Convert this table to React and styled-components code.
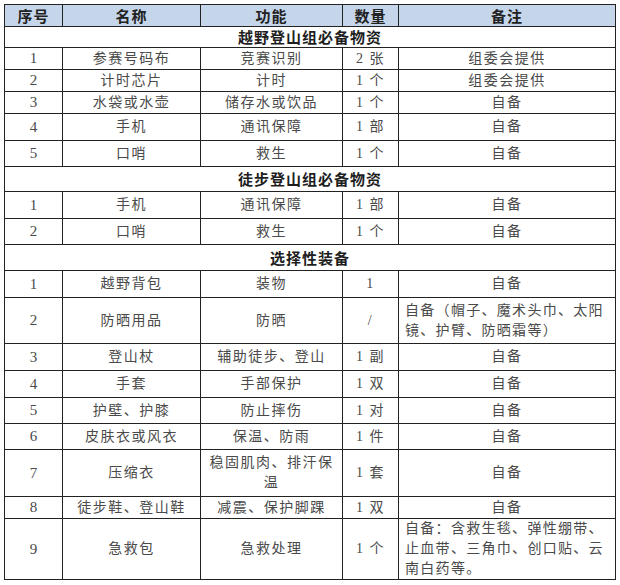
import React from 'react';
import styled, { createGlobalStyle } from 'styled-components';

const Global = createGlobalStyle`
body {
  margin: 0;
  background: #fff;
}
`

const Page = styled.div`
padding: 4px 0 0 4px;
`

const Table = styled.table`
border-collapse: collapse;
table-layout: fixed;
width: 611px;
font-family: "Liberation Serif", "Noto Sans CJK SC", serif;
color: #4a4a4a;
`

const HeadCell = styled.th`
height: 21px;
padding: 0;
border: 1px solid #222;
background: #c6d6ea;
font-family: "Noto Sans CJK SC", sans-serif;
font-size: 15px;
font-weight: 700;
letter-spacing: 1px;
line-height: 20px;
color: #222;
text-align: center;
`

const SectionCell = styled.td`
height: ${props => props.h}px;
padding: 0;
border: 1px solid #222;
font-family: "Noto Sans CJK SC", sans-serif;
font-size: 15px;
font-weight: 700;
letter-spacing: 1px;
line-height: 20px;
color: #1e1e1e;
text-align: center;
`

const Cell = styled.td`
height: ${props => props.h}px;
padding: 0 ${props => (props.left ? '6px' : '0')};
border: 1px solid #222;
font-size: 14px;
letter-spacing: ${props => (props.left ? '1.3px' : '1.5px')};
line-height: 20px;
white-space: nowrap;
overflow: hidden;
text-align: ${props => (props.left ? 'left' : 'center')};
vertical-align: middle;
`

const Num = styled.span`
font-size: 15px;
letter-spacing: 0;
`

const sections = [
  {
    title: '越野登山组必备物资',
    h: 20,
    rows: [
      ['1', '参赛号码布', '竞赛识别', '2 张', '组委会提供', 20],
      ['2', '计时芯片', '计时', '1 个', '组委会提供', 21],
      ['3', '水袋或水壶', '储存水或饮品', '1 个', '自备', 20],
      ['4', '手机', '通讯保障', '1 部', '自备', 26],
      ['5', '口哨', '救生', '1 个', '自备', 25],
    ],
  },
  {
    title: '徒步登山组必备物资',
    h: 24,
    rows: [
      ['1', '手机', '通讯保障', '1 部', '自备', 26],
      ['2', '口哨', '救生', '1 个', '自备', 25],
    ],
  },
  {
    title: '选择性装备',
    h: 25,
    rows: [
      ['1', '越野背包', '装物', '1', '自备', 26],
      ['2', '防晒用品', '防晒', '/', ['自备（帽子、魔术头巾、太阳', '镜、护臂、防晒霜等）'], 45],
      ['3', '登山杖', '辅助徒步、登山', '1 副', '自备', 26],
      ['4', '手套', '手部保护', '1 双', '自备', 26],
      ['5', '护壁、护膝', '防止摔伤', '1 对', '自备', 25],
      ['6', '皮肤衣或风衣', '保温、防雨', '1 件', '自备', 25],
      ['7', '压缩衣', ['稳固肌肉、排汗保', '温'], '1 套', '自备', 46],
      ['8', '徒步鞋、登山鞋', '减震、保护脚踝', '1 双', '自备', 21],
      ['9', '急救包', '急救处理', '1 个', ['自备：含救生毯、弹性绷带、', '止血带、三角巾、创口贴、云', '南白药等。'], 59],
    ],
  },
]

const Lines = ({ value }) => {
  if (!Array.isArray(value)) return value;
  return value.map((line, i) => (
    <React.Fragment key={i}>
      {i > 0 && <br />}
      {line}
    </React.Fragment>
  ));
}

const App = () => {
  return (
    <Page>
      <Global />
      <Table>
        <colgroup>
          <col style={{ width: 58 }} />
          <col style={{ width: 138 }} />
          <col style={{ width: 142 }} />
          <col style={{ width: 56 }} />
          <col style={{ width: 217 }} />
        </colgroup>
        <thead>
          <tr>
            <HeadCell>序号</HeadCell>
            <HeadCell>名称</HeadCell>
            <HeadCell>功能</HeadCell>
            <HeadCell>数量</HeadCell>
            <HeadCell>备注</HeadCell>
          </tr>
        </thead>
        <tbody>
          {sections.map((sec) => (
            <React.Fragment key={sec.title}>
              <tr>
                <SectionCell colSpan={5} h={sec.h}>{sec.title}</SectionCell>
              </tr>
              {sec.rows.map(([no, name, use, qty, note, h]) => (
                <tr key={sec.title + no}>
                  <Cell h={h}><Num>{no}</Num></Cell>
                  <Cell h={h}>{name}</Cell>
                  <Cell h={h}><Lines value={use} /></Cell>
                  <Cell h={h}>{qty}</Cell>
                  <Cell h={h} left={Array.isArray(note)}><Lines value={note} /></Cell>
                </tr>
              ))}
            </React.Fragment>
          ))}
        </tbody>
      </Table>
    </Page>
  )
}

export default App;
